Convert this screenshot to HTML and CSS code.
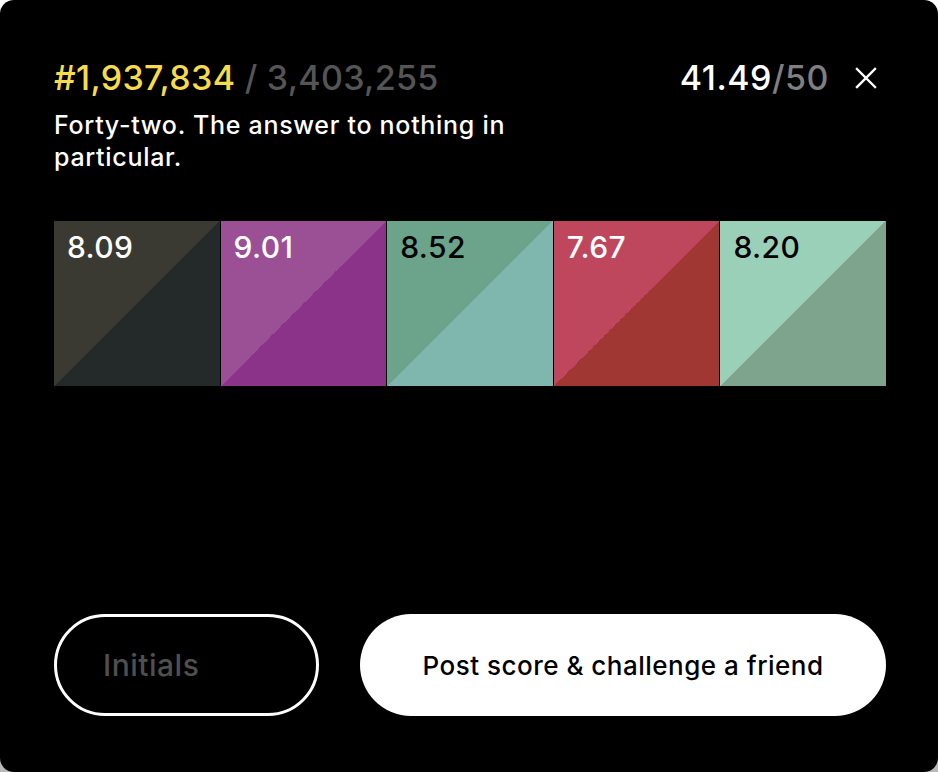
FILE: index.html
```html
<!DOCTYPE html>
<html lang="en">
<head>
<meta charset="utf-8">
<title>Score</title>
<link rel="stylesheet" href="styles.css">
</head>
<body>
<div class="card">
  <header class="head">
    <div class="head-left">
      <div class="rank"><span class="rank-num">#1,937,834</span> <span class="rank-total">/ 3,403,255</span></div>
      <p class="quip">Forty-two. The answer to nothing in particular.</p>
    </div>
    <div class="head-right">
      <div class="total"><span class="total-num">41.49</span><span class="total-max">/50</span></div>
      <button class="close" aria-label="Close">
        <svg width="22" height="22" viewBox="0 0 22 22"><path d="M2 2 L20 20 M20 2 L2 20" stroke="#fff" stroke-width="2.4" stroke-linecap="square" fill="none"/></svg>
      </button>
    </div>
  </header>

  <div class="swatches">
    <div class="swatch s1"><span class="val light">8.09</span></div>
    <div class="swatch s2"><span class="val light">9.01</span></div>
    <div class="swatch s3"><span class="val dark">8.52</span></div>
    <div class="swatch s4"><span class="val light">7.67</span></div>
    <div class="swatch s5"><span class="val dark">8.20</span></div>
  </div>

  <div class="actions">
    <input class="initials" type="text" placeholder="Initials">
    <button class="post">Post score &amp; challenge a friend</button>
  </div>
</div>
</body>
</html>
```

FILE: styles.css
```css
* { box-sizing: border-box; }
html, body { margin: 0; padding: 0; }
body {
  width: 938px;
  height: 772px;
  background: linear-gradient(to bottom, #ffffff, #b9b9b9);
  font-family: "Inter", "Liberation Sans", sans-serif;
  overflow: hidden;
}
.card {
  width: 938px;
  height: 772px;
  background: #000;
  border-radius: 14px;
  padding: 55px 52px 56px 54px;
  display: flex;
  flex-direction: column;
}
.head {
  display: flex;
  justify-content: space-between;
  align-items: flex-start;
  flex-shrink: 0;
}
.rank {
  font-size: 34px;
  font-weight: 500;
  line-height: 46px;
  letter-spacing: 0.3px;
}
.rank-num { color: #f6dc4c; }
.rank-total { color: #555555; }
.quip {
  margin: 8px 0 0;
  color: #fff;
  font-size: 25px;
  font-weight: 500;
  line-height: 32px;
  max-width: 480px;
  letter-spacing: 0.7px;
}
.head-right {
  display: flex;
  align-items: center;
  height: 46px;
}
.total {
  font-size: 34px;
  font-weight: 500;
  letter-spacing: 0.5px;
  line-height: 46px;
}
.total-num { color: #fff; }
.total-max { color: #7f7f7f; }
.close {
  background: none;
  border: 0;
  padding: 0;
  margin: 0 9px 0 26px;
  width: 22px;
  height: 22px;
  display: flex;
}
.swatches {
  margin-top: 48px;
  display: flex;
  gap: 1px;
  height: 165px;
  flex-shrink: 0;
}
.swatch {
  flex: 1;
  padding: 8px 13px;
}
.val {
  font-size: 30px;
  font-weight: 500;
  letter-spacing: 0.4px;
  line-height: 36px;
}
.light { color: #fff; }
.dark { color: #000; }
.s1 { background: linear-gradient(to bottom right, #3a3a33 50%, #232a29 50%); }
.s2 { background: linear-gradient(to bottom right, #9b4f94 50%, #8a3388 50%); }
.s3 { background: linear-gradient(to bottom right, #6ba48a 50%, #7fb6ad 50%); }
.s4 { background: linear-gradient(to bottom right, #be475e 50%, #a03733 50%); }
.s5 { background: linear-gradient(to bottom right, #9acfb8 50%, #7fa48d 50%); }
.actions {
  margin-top: auto;
  display: flex;
  gap: 41px;
  height: 102px;
  flex-shrink: 0;
}
.initials {
  width: 265px;
  height: 102px;
  border: 3px solid #fff;
  border-radius: 51px;
  background: #000;
  color: #fff;
  padding: 0 0 0 46px;
  font-family: inherit;
  font-size: 30px;
  font-weight: 500;
  letter-spacing: 0.5px;
  outline: none;
}
.initials::placeholder { color: #4f4f4f; }
.post {
  flex: 1;
  height: 102px;
  border: 0;
  border-radius: 51px;
  background: #fff;
  color: #000;
  font-family: inherit;
  font-size: 26px;
  font-weight: 500;
  letter-spacing: 0.5px;
}
```
